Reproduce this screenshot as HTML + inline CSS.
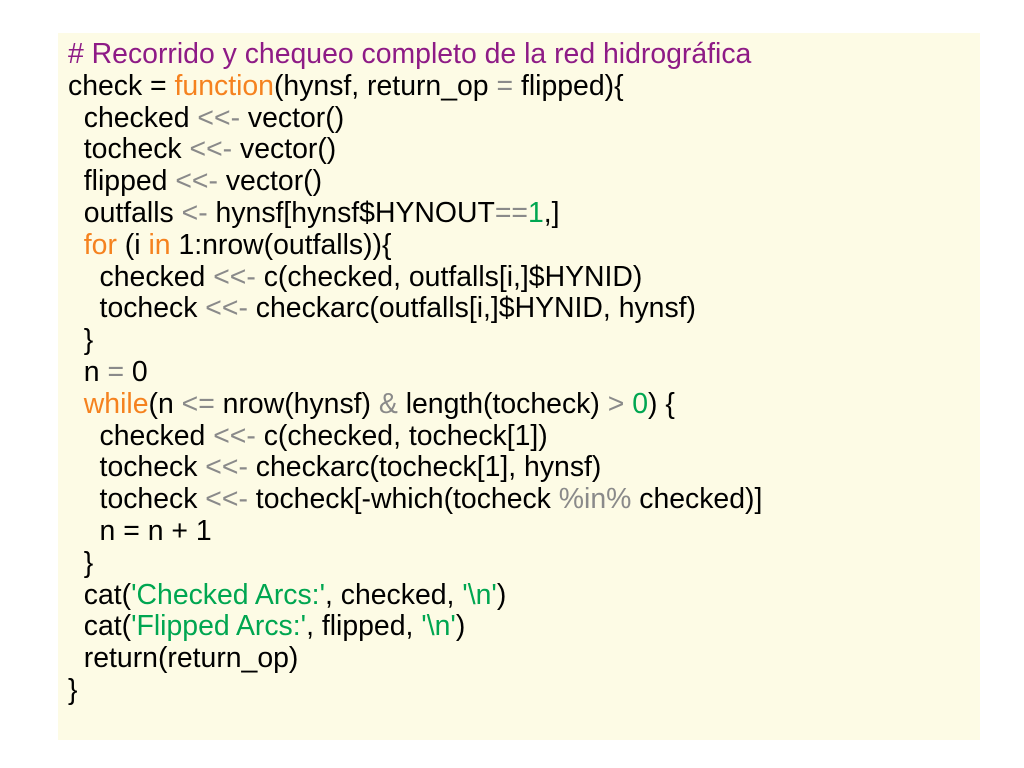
<!DOCTYPE html>
<html><head><meta charset="utf-8"><style>
html,body{margin:0;padding:0;background:#fff;width:1024px;height:768px;overflow:hidden}
#box{position:absolute;left:58px;top:33px;width:922px;height:707px;background:#fdfbe5}
pre{position:absolute;left:68px;top:39px;margin:0;font-family:"Liberation Sans",sans-serif;font-size:28.4px;line-height:31.8px;color:#000}
.c{color:#8e1b86}.k{color:#f5821f}.o{color:#8a8a8a}.n{color:#00a651}.s{color:#00a651}
</style></head><body>
<div id="box"></div>
<pre><span class="c"># Recorrido y chequeo completo de la red hidrográfica</span>
check = <span class="k">function</span>(hynsf, return_op <span class="o">=</span> flipped){
  checked <span class="o">&lt;&lt;-</span> vector()
  tocheck <span class="o">&lt;&lt;-</span> vector()
  flipped <span class="o">&lt;&lt;-</span> vector()
  outfalls <span class="o">&lt;-</span> hynsf[hynsf$HYNOUT<span class="o">==</span><span class="n">1</span>,]
  <span class="k">for</span> (i <span class="k">in</span> 1:nrow(outfalls)){
    checked <span class="o">&lt;&lt;-</span> c(checked, outfalls[i,]$HYNID)
    tocheck <span class="o">&lt;&lt;-</span> checkarc(outfalls[i,]$HYNID, hynsf)
  }
  n <span class="o">=</span> 0
  <span class="k">while</span>(n <span class="o">&lt;=</span> nrow(hynsf) <span class="o">&amp;</span> length(tocheck) <span class="o">&gt;</span> <span class="n">0</span>) {
    checked <span class="o">&lt;&lt;-</span> c(checked, tocheck[1])
    tocheck <span class="o">&lt;&lt;-</span> checkarc(tocheck[1], hynsf)
    tocheck <span class="o">&lt;&lt;-</span> tocheck[-which(tocheck <span class="o">%in%</span> checked)]
    n = n + 1
  }
  cat(<span class="s">'Checked Arcs:'</span>, checked, <span class="s">'\n'</span>)
  cat(<span class="s">'Flipped Arcs:'</span>, flipped, <span class="s">'\n'</span>)
  return(return_op)
}</pre>
</body></html>
